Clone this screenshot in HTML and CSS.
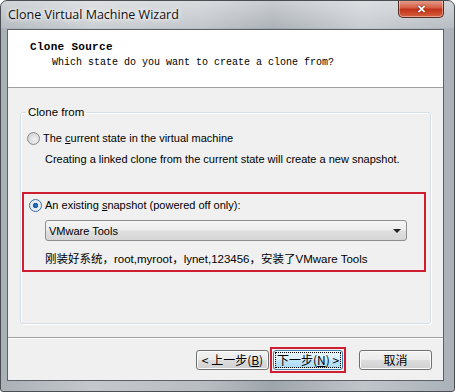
FILE: index.html
```html
<!DOCTYPE html>
<html lang="en">
<head>
  <meta charset="UTF-8">
  <title>Clone Virtual Machine Wizard</title>
  <link rel="stylesheet" href="styles.css">
</head>
<body>

<div class="window">
  <div class="titlebar">
    <span class="title">Clone Virtual Machine Wizard</span>
    <button class="close-btn">&#x2715;</button>
  </div>

  <div class="client">
    <div class="header">
      <div class="header-title">Clone Source</div>
      <div class="header-sub">Which state do you want to create a clone from?</div>
    </div>

    <div class="body">
      <fieldset class="group">
        <legend>Clone from</legend>

        <div class="option first">
          <span class="radio"></span>
          <span>The <u>c</u>urrent state in the virtual machine</span>
        </div>
        <div class="note">Creating a linked clone from the current state will create a new snapshot.</div>

        <div class="highlight">
          <div class="option">
            <span class="radio checked"></span>
            <span>An existing <u>s</u>napshot (powered off only):</span>
          </div>
          <div class="select">
            <span>VMware Tools</span>
            <span class="arrow"></span>
          </div>
          <div class="snap-desc">刚装好系统，root,myroot，lynet,123456，安装了VMware Tools</div>
        </div>
      </fieldset>
    </div>

    <div class="footer">
      <button class="btn">&lt; 上一步(<u>B</u>)</button>
      <span class="mark"><button class="btn btn-focus"><span class="focus-rect">下一步(<u>N</u>) &gt;</span></button></span>
      <button class="btn btn-cancel">取消</button>
    </div>
  </div>
</div>

</body>
</html>
```

FILE: styles.css
```css
body {
  margin: 0;
  background: #fff;
  font-family: "Liberation Sans", Arial, sans-serif;
  font-size: 11px;
  color: #000;
}

.window {
  width: 455px;
  height: 392px;
  box-sizing: border-box;
  border: 1px solid #4a4e52;
  border-radius: 7px 7px 3px 3px;
  background: linear-gradient(90deg, #a9b0b6 0%, #c4c8cc 20%, #b8bdc2 45%, #9ea5ab 60%, #c0c5ca 80%, #aab1b8 100%);
  display: flex;
  flex-direction: column;
  overflow: hidden;
}

.titlebar {
  height: 27px;
  display: flex;
  justify-content: space-between;
  align-items: flex-start;
  padding: 0 10px 0 7px;
  background: linear-gradient(180deg, rgba(255,255,255,0.45), rgba(255,255,255,0.15));
}

.title {
  font-family: "Open Sans", sans-serif;
  font-size: 12.5px;
  line-height: 28px;
  color: #111;
  text-shadow: 0 0 6px #fff, 0 0 4px #fff;
}

.close-btn {
  width: 46px;
  height: 18px;
  margin-top: -1px;
  border: 1px solid #5a2a25;
  border-top: none;
  border-radius: 0 0 5px 5px;
  background: linear-gradient(180deg, #e8a393 0%, #d45f45 45%, #c0331a 55%, #d8603e 100%);
  box-shadow: inset 0 0 0 1px rgba(255,255,255,0.4);
  color: #fff;
  font-size: 11px;
  font-weight: bold;
  line-height: 16px;
  padding: 0;
  text-shadow: 0 0 2px #400;
}

.client {
  margin: 1px 10px 10px 6px;
  flex: 1;
  border: 1px solid #5b6066;
  background: #f0f0f0;
  display: flex;
  flex-direction: column;
}

.header {
  height: 58px;
  background: #fff;
  border-bottom: 1px solid #a0a0a0;
  box-sizing: border-box;
  padding: 10px 0 0 22px;
  font-family: "Liberation Mono", monospace;
}

.header-title {
  font-size: 11px;
  font-weight: bold;
  line-height: 15px;
  letter-spacing: 0.3px;
}

.header-sub {
  font-size: 10px;
  line-height: 15px;
  padding-left: 22px;
}

.body {
  flex: 1;
  padding: 16px 12px 13px 12px;
  border-bottom: 1px solid #a0a0a0;
  box-shadow: 0 1px 0 #fff;
  display: flex;
}

.group {
  flex: 1;
  margin: 0;
  padding: 4px 2px 0 1px;
  border: 1px solid #d5dfe5;
  border-radius: 3px;
  box-shadow: inset 1px 1px 0 #fff, 1px 1px 0 #fff;
}

.group legend {
  padding: 0 2px;
  margin-left: 4px;
  line-height: 16px;
  font-size: 11.5px;
}

.option {
  display: flex;
  align-items: center;
  gap: 3px;
  height: 18px;
  padding-left: 5px;
}

.option.first {
  margin-top: 5px;
}

.radio {
  width: 11px;
  height: 11px;
  border-radius: 50%;
  border: 1px solid #8a8a8a;
  background: radial-gradient(circle at 60% 60%, #f4f4f4 0%, #d4d4d4 70%, #c4c4c4 100%);
  box-sizing: content-box;
}

.radio.checked {
  border-color: #3d6a96;
  background: radial-gradient(circle, #2c79c4 0%, #1b5a9e 30%, #dfe9f3 38%, #f4f7fa 100%);
}

.note {
  padding-left: 23px;
  margin-top: 3px;
  line-height: 18px;
  white-space: nowrap;
}

.highlight {
  margin: 24px 2px 0 0;
  border: 2px solid #cf1d31;
  padding: 2px 0 1px 0;
}

.select {
  margin: 6px 17px 0 21px;
  height: 19px;
  border: 1px solid #8d8e8f;
  border-radius: 3px;
  background: linear-gradient(180deg, #f5f5f5 0%, #ececec 48%, #dfdfdf 52%, #d6d6d6 100%);
  display: flex;
  align-items: center;
  justify-content: space-between;
  padding: 0 5px 0 3px;
}

.arrow {
  width: 0;
  height: 0;
  border-left: 4px solid transparent;
  border-right: 4px solid transparent;
  border-top: 4px solid #222;
}

.snap-desc {
  font-family: "Liberation Sans", "Noto Sans CJK SC", sans-serif;
  font-size: 11.5px;
  line-height: 20px;
  margin: 8px 0 0 21px;
  white-space: nowrap;
}

.footer {
  height: 42px;
  display: flex;
  align-items: center;
  justify-content: flex-end;
  padding: 2px 11px 0 0;
  box-sizing: border-box;
}

.btn {
  width: 73px;
  height: 20px;
  padding: 0;
  border: 1px solid #707070;
  border-radius: 3px;
  background: linear-gradient(180deg, #f2f2f2 0%, #ebebeb 48%, #dddddd 52%, #cfcfcf 100%);
  box-shadow: inset 0 0 0 1px #fbfbfb;
  font-family: "Noto Sans CJK SC", sans-serif;
  font-size: 12px;
  line-height: 16px;
  color: #000;
}

.mark {
  border: 2px solid #cf1d31;
  padding: 1px;
  margin: 0 13px 0 1px;
  display: flex;
}

.btn-focus {
  width: 70px;
  border-color: #3c7fb1;
  background: linear-gradient(180deg, #eaf6fd 0%, #d9f0fc 48%, #bee6fd 52%, #a7d9f5 100%);
  padding: 1px;
}

.focus-rect {
  display: block;
  border: 1px dotted #000;
  line-height: 14px;
}

.btn-cancel {
  width: 73px;
}
```
